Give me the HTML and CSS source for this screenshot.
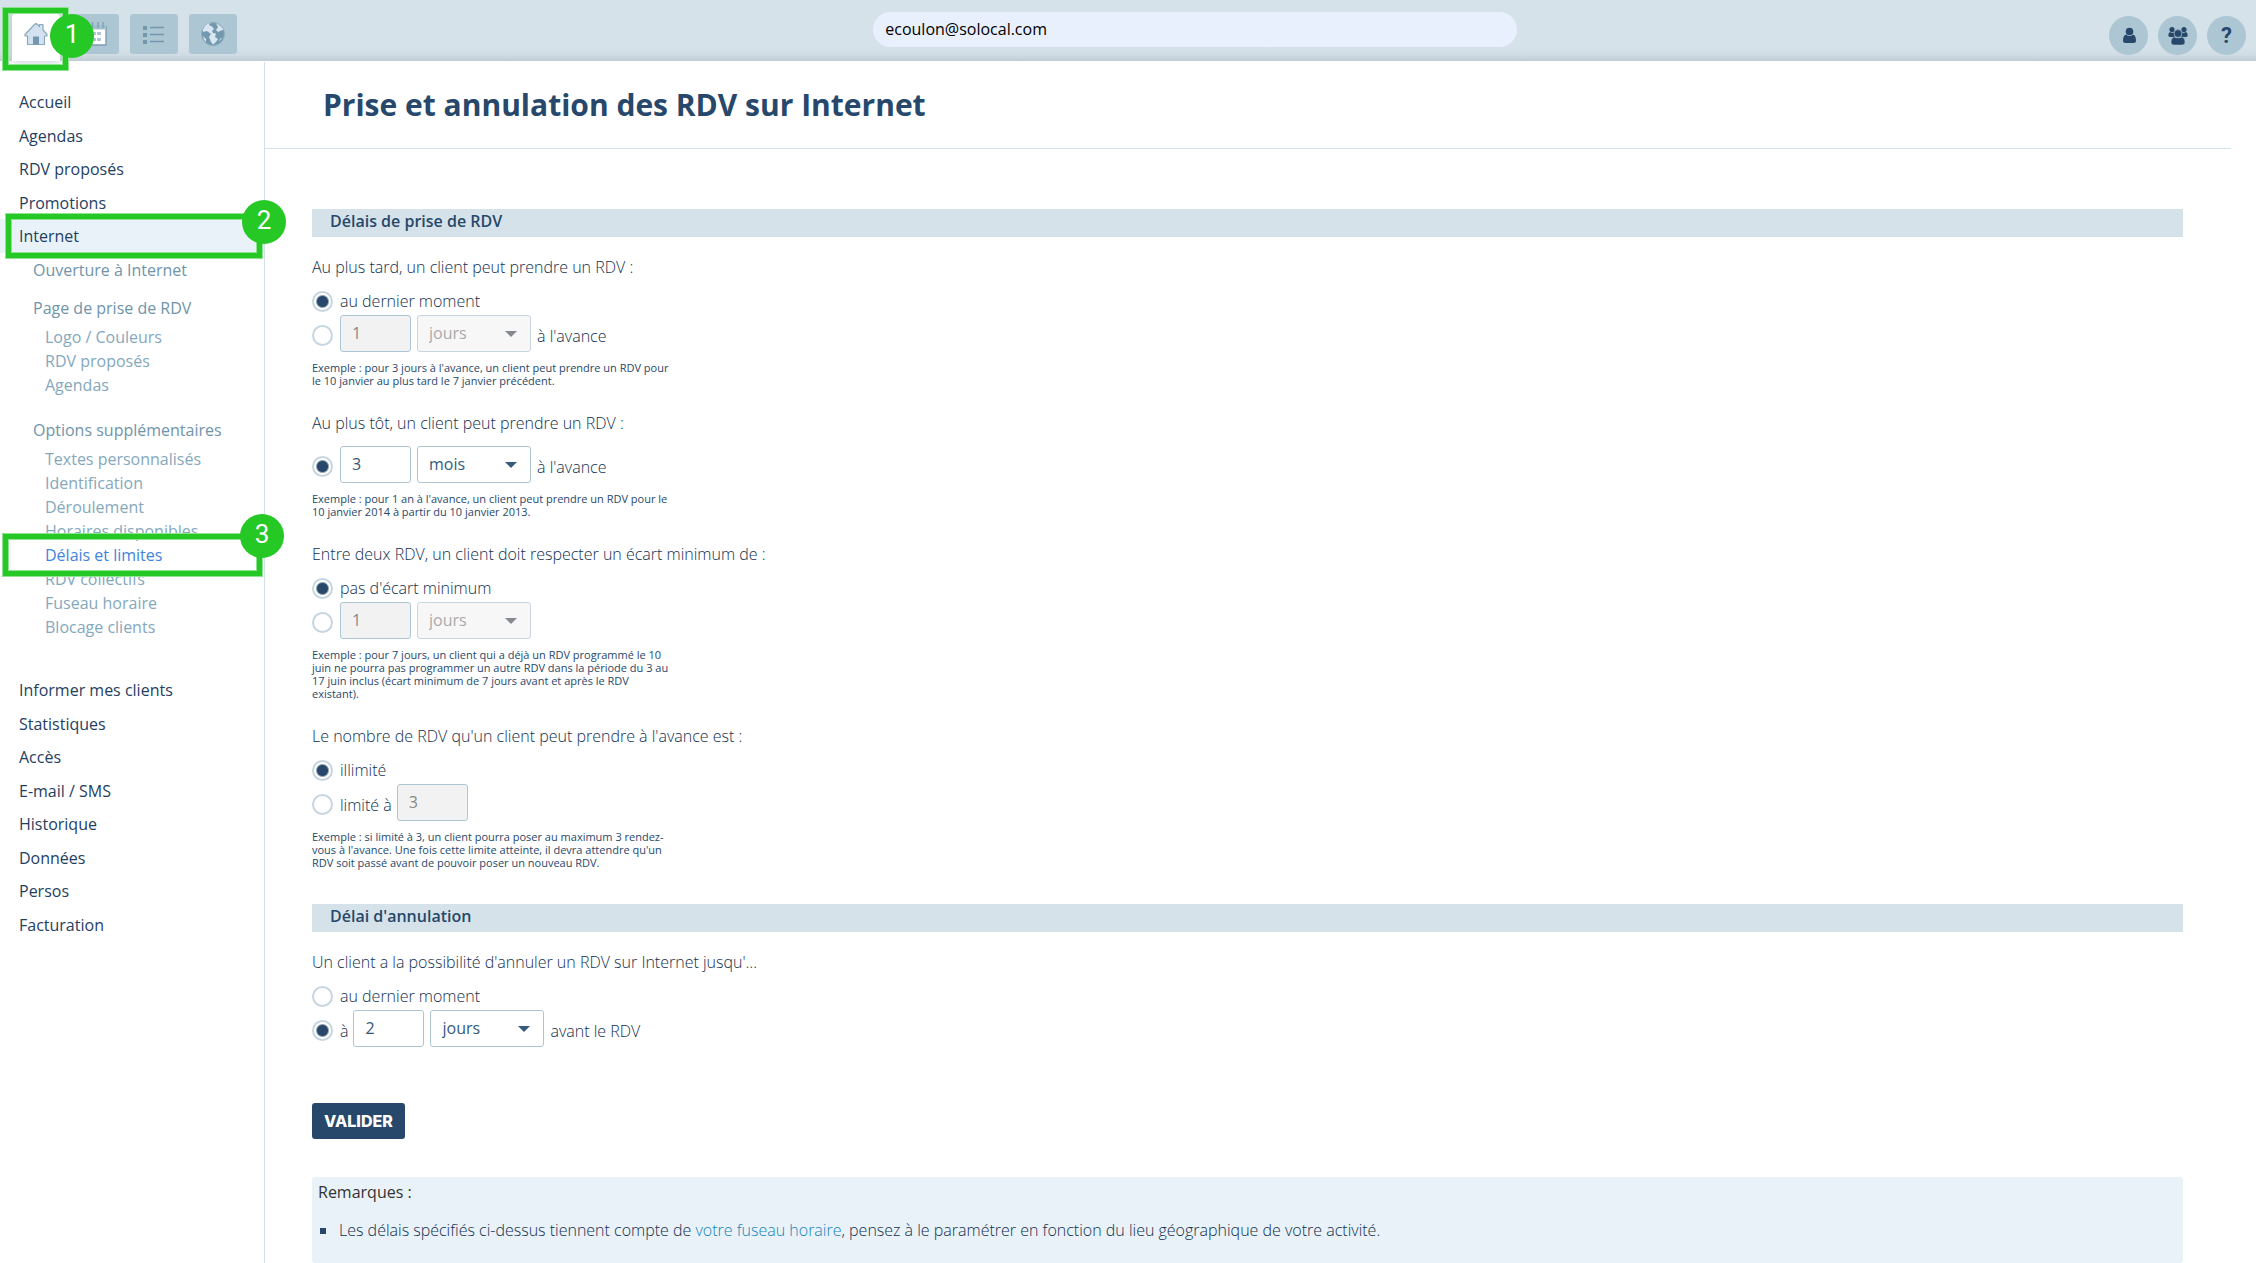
FILE: index.html
```html
<!DOCTYPE html>
<html lang="fr">
<head>
<meta charset="utf-8">
<meta name="viewport" content="width=device-width, initial-scale=1">
<title>Prise et annulation des RDV sur Internet</title>
<link rel="stylesheet" href="styles.css">
</head>
<body>
<div class="app">
  <header class="topbar">
    <nav class="tabs" aria-label="Sections">
      <a class="tab tab-active" href="#" aria-label="Accueil">
        <svg width="24" height="24" viewBox="0 0 24 24"><path d="M1 12.500 10.500 2.500Q12 1 13.500 2.500L15.500 4.500V2.500H19V8L23 12.500V14H20.500V22.500H3.500V14H1Z" fill="#d3e1f0" stroke="#89a9bb" stroke-width="1.200" stroke-linejoin="round"/><path d="M9 22.500V14.500H15V22.500Z" fill="#7397ac"/></svg>
      </a>
      <a class="tab" href="#" aria-label="Agenda">
        <svg width="24" height="24" viewBox="0 0 24 24"><path d="M1 4.500H23V23H1Z" fill="#fff" stroke="#7c9fb3" stroke-width="1.400"/><path d="M1 3H23V7.500H1Z" fill="#a3bfce"/><path d="M5 0V6M9.500 0V6M15 0V6M20 0V6" stroke="#7c9fb3" stroke-width="1.300"/><path d="M4 10H8V13H4ZM9 10H13V13H9ZM14 10H18V13H14ZM4 16H8V19H4ZM9 16H13V19H9ZM14 16H18V19H14Z" fill="#aec7d5"/></svg>
      </a>
      <a class="tab" href="#" aria-label="Liste">
        <svg width="24" height="24" viewBox="0 0 24 24"><path d="M1 4H5V8H1ZM1 11H5V15H1ZM1 18H5V22H1Z" fill="#7397ac"/><path d="M8 5.500H22M8 12.500H22M8 19.500H22" stroke="#7397ac" stroke-width="1.400"/></svg>
      </a>
      <a class="tab" href="#" aria-label="Internet">
        <svg width="24" height="24" viewBox="0 0 24 24"><circle cx="12" cy="12" r="11.500" fill="#7397ac" stroke="#8fafc0"/><path d="M4 4Q6 1.500 9.500 1L8 3 11 4.500 13 7 11 9 12 11 15 11.500 14 15 17 17 15 20 12 22.500 10 20 8 15 10 12 6 9 2.500 10 1.500 8ZM15 1.500Q20 3 22.500 8L20 8.500 17 10 15 8 17 5ZM2 14 5 17 5 20Q2.500 18 2 14ZM19 17 21.500 15 18 20Z" fill="#d8e6f2"/></svg>
      </a>
    </nav>
    <input class="search" type="text" value="ecoulon@solocal.com" aria-label="Rechercher">
    <div class="tools">
      <button class="tool" type="button" aria-label="Compte">
        <svg width="20" height="20" viewBox="0 0 20 20"><circle cx="10.500" cy="5.500" r="3.800"/><path d="M7 8.500Q10.500 11.500 14 8.500Q17 9.500 17 14.500Q17 17 14.500 17H6.500Q4 17 4 14.500Q4 9.500 7 8.500Z"/></svg>
      </button>
      <button class="tool" type="button" aria-label="Clients">
        <svg width="20" height="20" viewBox="0 0 20 20"><circle cx="4" cy="3.500" r="2.600"/><circle cx="16" cy="3.500" r="2.600"/><path d="M2 6Q4 7.500 6 6.300Q5.500 9 7 11H2Q.3 11 .3 9Q.3 7 2 6ZM18 6Q16 7.500 14 6.300Q14.500 9 13 11H18Q19.700 11 19.700 9Q19.700 7 18 6Z"/><circle cx="10" cy="7.500" r="3.900" stroke="#adc6d4" stroke-width=".6"/><path d="M6 11Q10 13 14 11Q17 12 17 16Q17 19 14 19H6Q3 19 3 16Q3 12 6 11Z" stroke="#adc6d4" stroke-width=".5"/></svg>
      </button>
      <button class="tool tool-help" type="button" aria-label="Aide">?</button>
    </div>
  </header>

  <div class="body">
    <aside class="sidebar">
      <ul class="menu">
        <li><a href="#">Accueil</a></li>
        <li><a href="#">Agendas</a></li>
        <li><a href="#">RDV proposés</a></li>
        <li><a href="#">Promotions</a></li>
        <li class="menu-current"><a href="#">Internet</a></li>
      </ul>
      <div class="submenu">
        <a class="group" href="#">Ouverture à Internet</a>
        <div class="subgroup">
          <a class="group" href="#">Page de prise de RDV</a>
          <ul class="sublist">
            <li><a href="#">Logo / Couleurs</a></li>
            <li><a href="#">RDV proposés</a></li>
            <li><a href="#">Agendas</a></li>
          </ul>
        </div>
        <div class="subgroup">
          <a class="group" href="#">Options supplémentaires</a>
          <ul class="sublist">
            <li><a href="#">Textes personnalisés</a></li>
            <li><a href="#">Identification</a></li>
            <li><a href="#">Déroulement</a></li>
            <li><a href="#">Horaires disponibles</a></li>
            <li><a class="selected" href="#">Délais et limites</a></li>
            <li><a href="#">RDV collectifs</a></li>
            <li><a href="#">Fuseau horaire</a></li>
            <li><a href="#">Blocage clients</a></li>
          </ul>
        </div>
      </div>
      <ul class="menu">
        <li><a href="#">Informer mes clients</a></li>
        <li><a href="#">Statistiques</a></li>
        <li><a href="#">Accès</a></li>
        <li><a href="#">E-mail / SMS</a></li>
        <li><a href="#">Historique</a></li>
        <li><a href="#">Données</a></li>
        <li><a href="#">Persos</a></li>
        <li><a href="#">Facturation</a></li>
      </ul>
    </aside>

    <main class="main">
      <h1 class="title">Prise et annulation des RDV sur Internet</h1>
      <form class="content">
        <h2 class="bar">Délais de prise de RDV</h2>

        <div class="field" role="group" aria-labelledby="q-late">
          <p class="question" id="q-late">Au plus tard, un client peut prendre un RDV :</p>
          <div class="option"><input type="radio" name="late" id="late-0" checked><label for="late-0">au dernier moment</label></div>
          <div class="option option-inputs">
            <input type="radio" name="late" id="late-1" aria-label="délai">
            <input class="number" type="text" value="1" aria-label="Nombre" disabled>
            <span class="select disabled"><select aria-label="Unité" disabled><option>jours</option></select></span>
            <label for="late-1">à l'avance</label>
          </div>
          <p class="hint">Exemple : pour 3 jours à l'avance, un client peut prendre un RDV pour le 10 janvier au plus tard le 7 janvier précédent.</p>
        </div>

        <div class="field field-single" role="group" aria-labelledby="q-early">
          <p class="question" id="q-early">Au plus tôt, un client peut prendre un RDV :</p>
          <div class="option option-inputs">
            <input type="radio" name="early" id="early-1" checked>
            <input class="number" type="text" value="3" aria-label="Nombre">
            <span class="select"><select aria-label="Unité"><option>mois</option></select></span>
            <label for="early-1">à l'avance</label>
          </div>
          <p class="hint">Exemple : pour 1 an à l'avance, un client peut prendre un RDV pour le 10 janvier 2014 à partir du 10 janvier 2013.</p>
        </div>

        <div class="field" role="group" aria-labelledby="q-gap">
          <p class="question" id="q-gap">Entre deux RDV, un client doit respecter un écart minimum de :</p>
          <div class="option"><input type="radio" name="gap" id="gap-0" checked><label for="gap-0">pas d'écart minimum</label></div>
          <div class="option option-inputs">
            <input type="radio" name="gap" aria-label="écart minimum">
            <input class="number" type="text" value="1" aria-label="Nombre" disabled>
            <span class="select disabled"><select aria-label="Unité" disabled><option>jours</option></select></span>
          </div>
          <p class="hint">Exemple : pour 7 jours, un client qui a déjà un RDV programmé le 10 juin ne pourra pas programmer un autre RDV dans la période du 3 au 17 juin inclus (écart minimum de 7 jours avant et après le RDV existant).</p>
        </div>

        <div class="field" role="group" aria-labelledby="q-max">
          <p class="question" id="q-max">Le nombre de RDV qu'un client peut prendre à l'avance est :</p>
          <div class="option"><input type="radio" name="max" id="max-0" checked><label for="max-0">illimité</label></div>
          <div class="option option-inputs">
            <input type="radio" name="max" id="max-1"><label class="before" for="max-1">limité à</label>
            <input class="number" type="text" value="3" aria-label="Nombre maximum" disabled>
          </div>
          <p class="hint">Exemple : si limité à 3, un client pourra poser au maximum 3 rendez-vous à l'avance. Une fois cette limite atteinte, il devra attendre qu'un RDV soit passé avant de pouvoir poser un nouveau RDV.</p>
        </div>

        <h2 class="bar bar-next">Délai d'annulation</h2>

        <div class="field" role="group" aria-labelledby="q-cancel">
          <p class="question" id="q-cancel">Un client a la possibilité d'annuler un RDV sur Internet jusqu'...</p>
          <div class="option"><input type="radio" name="cancel" id="cancel-0"><label for="cancel-0">au dernier moment</label></div>
          <div class="option option-inputs">
            <input type="radio" name="cancel" id="cancel-1" checked><label class="before" for="cancel-1">à</label>
            <input class="number" type="text" value="2" aria-label="Nombre">
            <span class="select"><select aria-label="Unité"><option>jours</option></select></span>
            <label for="cancel-1">avant le RDV</label>
          </div>
        </div>

        <button class="submit" type="submit">VALIDER</button>

        <section class="notes">
          <h3>Remarques :</h3>
          <ul>
            <li>Les délais spécifiés ci-dessus tiennent compte de <a href="#">votre fuseau horaire</a>, pensez à le paramétrer en fonction du lieu géographique de votre activité.</li>
          </ul>
        </section>
      </form>
    </main>
  </div>

  <div class="frame frame-1"><span class="step">1</span></div>
  <div class="frame frame-2"><span class="step">2</span></div>
  <div class="frame frame-3"><span class="step">3</span></div>
</div>
</body>
</html>
```
FILE: styles.css
```css
* { box-sizing: border-box; }
body, h1, h2, h3, p, ul { margin: 0; padding: 0; }
ul { list-style: none; }
a { color: inherit; text-decoration: none; }
body, input, select, button { font-family: "Open Sans", sans-serif; font-size: 16px; color: #27486a; }
body { background: #fff; line-height: 24px; }

.app { position: relative; display: flex; flex-direction: column; min-height: 100vh; }

/* Top bar */
.topbar {
  display: grid;
  grid-template-columns: 13fr 644px 11fr;
  height: 61px;
  padding: 0 10px 0 12px;
  background: linear-gradient(to top, #bfccd3, #d0dce3 6px, #d6e2e9 14px);
}
.tabs { display: flex; gap: 11px; padding-top: 14px; }
.tab {
  display: flex;
  justify-content: center;
  width: 48px;
  height: 40px;
  padding-top: 8px;
  background: #adc6d4;
  border-radius: 3px;
}
.tab-active { height: 47px; background: #fff; border-radius: 3px 3px 0 0; box-shadow: 0 0 10px #b4c3cc; }
.search {
  height: 35px;
  margin-top: 12px;
  padding: 0 12px 2px;
  border: 0;
  border-radius: 18px;
  background: #e8f0fe;
  color: #000;
  font-weight: 500;
}
.tools { display: flex; justify-content: flex-end; gap: 10px; padding-top: 16px; }
.tool {
  display: grid;
  place-items: center;
  width: 39px;
  height: 39px;
  padding: 0;
  border: 0;
  border-radius: 50%;
  background: #adc6d4;
  fill: #27486a;
}
.tool-help { font: 700 22px/39px Roboto, sans-serif; }

/* Sidebar */
.body { display: flex; flex: 1; }
.sidebar { flex: 0 0 265px; margin-top: 1px; padding-top: 23px; border-right: 1px solid #d0e1e9; font-weight: 500; }
.menu li { height: 34px; padding: 5px 19px; color: #1f4062; }
.menu li:nth-child(even) { height: 33px; }
.menu .menu-current { background: #e9f2f8; }
.submenu { padding: 5px 0 34px 33px; color: #7094aa; }
.group { display: block; margin-bottom: 5px; }
.subgroup { padding-top: 9px; }
.subgroup + .subgroup { padding-top: 21px; }
.sublist { padding-left: 12px; color: #84a8bc; }
.selected { color: #3f84dd; }

/* Page */
.main { display: flex; flex: 1; flex-direction: column; }
.title {
  margin-right: 25px;
  padding: 24px 58px 23px;
  border-bottom: 1px solid #d0e1e9;
  font-size: 30px;
  line-height: 40px;
}
.content { display: flex; flex: 1; flex-direction: column; align-items: flex-start; padding: 60px 73px 0 47px; }
.bar { align-self: stretch; padding: 0 18px 4px; background: #d6e2e9; font-size: 16px; font-weight: 600; line-height: 24px; }
.bar-next { margin-top: 35px; }
.field { margin-top: 24px; }
.bar + .field { margin-top: 18px; }
.question, .option label, .notes li { color: #12304f; font-weight: 300; }
.option { display: flex; align-items: center; height: 28px; margin-top: 8px; }
.option-inputs { height: 37px; margin-top: 0; }
.field-single .option-inputs { margin-top: 11px; }
.option-inputs input[type="radio"], .option-inputs label { position: relative; top: 2px; }
.before { margin-right: 5px; }
.hint { width: 360px; margin-top: 9px; font-size: 11px; line-height: 13px; }

input[type="radio"] {
  appearance: none;
  width: 21px;
  height: 21px;
  margin: 0 7px 0 0;
  border: 2px solid #c5d6e1;
  border-radius: 50%;
  background: #fff;
}
input[type="radio"]:checked { background: radial-gradient(circle, #27486a 5px, #fff 7px); }
.number {
  width: 71px;
  height: 37px;
  margin-right: 6px;
  padding: 0 11px 2px;
  border: 1px solid #adc6d4;
  border-radius: 3px;
  background: #fff;
  color: #355675;
}
.number:disabled { background: #f2f2f2; color: #888; }
.select { position: relative; margin-right: 6px; }
.select select {
  display: block;
  appearance: none;
  width: 114px;
  height: 37px;
  padding: 0 11px 2px;
  border: 1px solid #adc6d4;
  border-radius: 3px;
  background: #fff;
  color: #355b7c;
  font-weight: 500;
}
.select::after {
  content: "";
  position: absolute;
  top: 16px;
  right: 14px;
  border: 6px solid transparent;
  border-top-color: #355b7c;
  border-bottom: 0;
}
.select.disabled select { border-color: #c6d7e1; background: #f7f7f7; color: #aaa; opacity: 1; }
.select.disabled::after { border-top-color: #858a90; }

.submit {
  height: 36px;
  margin-top: 56px;
  padding: 0 12px;
  border: 0;
  border-radius: 3px;
  background: #27486a;
  color: #fff;
  font: 800 16px/34px Inter, sans-serif;
}
.notes { flex: 1; align-self: stretch; margin-top: 38px; padding: 3px 6px 20px; border-radius: 3px; background: #e9f2f8; }
.notes h3 { color: #333; font-size: 16px; font-weight: 500; }
.notes ul { margin-top: 14px; }
.notes li { display: list-item; padding-left: 21px; background: linear-gradient(#27486a, #27486a) 2px 10px / 6px 6px no-repeat; }
.notes a { color: #1583bb; }

/* Numbered walkthrough highlights laid over the page */
.frame { position: absolute; border: 5px solid #26c826; outline: 1px solid #90e390; box-shadow: inset 0 0 0 1px #90e390; }
.frame-1 { top: 8px; left: 3px; width: 65px; height: 62px; }
.frame-2 { top: 214px; left: 6px; width: 256px; height: 44px; }
.frame-3 { top: 534px; left: 3px; width: 259px; height: 42px; }
.step {
  position: absolute;
  top: -19px;
  right: -29px;
  width: 44px;
  height: 44px;
  border-radius: 50%;
  background: #26c826;
  color: #fff;
  font: 26px/40px Roboto, sans-serif;
  text-align: center;
}
.frame-1 .step { top: 1px; right: -31px; }
.frame-3 .step { top: -25px; right: -27px; }
```
